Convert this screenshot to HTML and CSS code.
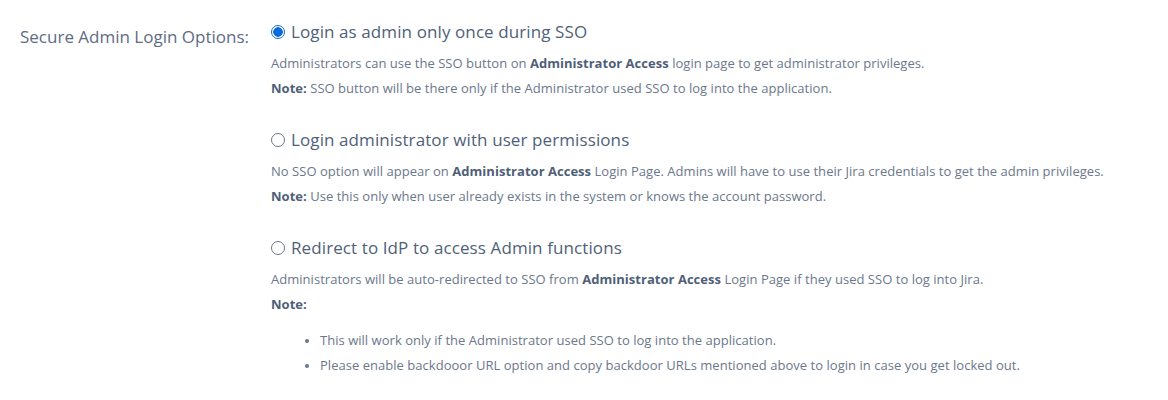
FILE: index.html
```html
<!DOCTYPE html>
<html>
<head>
<meta charset="utf-8">
<link rel="stylesheet" href="styles.css">
</head>
<body>
<div class="row">
  <div class="label">Secure Admin Login Options:</div>
  <div class="options">
    <div class="option">
      <label class="title"><span class="radio checked"></span>Login as admin only once during SSO</label>
      <p class="desc">Administrators can use the SSO button on <b>Administrator Access</b> login page to get administrator privileges.</p>
      <p class="desc"><b>Note:</b> SSO button will be there only if the Administrator used SSO to log into the application.</p>
    </div>
    <div class="option">
      <label class="title"><span class="radio"></span>Login administrator with user permissions</label>
      <p class="desc">No SSO option will appear on <b>Administrator Access</b> Login Page. Admins will have to use their Jira credentials to get the admin privileges.</p>
      <p class="desc"><b>Note:</b> Use this only when user already exists in the system or knows the account password.</p>
    </div>
    <div class="option">
      <label class="title"><span class="radio"></span>Redirect to IdP to access Admin functions</label>
      <p class="desc">Administrators will be auto-redirected to SSO from <b>Administrator Access</b> Login Page if they used SSO to log into Jira.</p>
      <p class="desc"><b>Note:</b></p>
      <ul class="bullets">
        <li>This will work only if the Administrator used SSO to log into the application.</li>
        <li>Please enable backdooor URL option and copy backdoor URLs mentioned above to login in case you get locked out.</li>
      </ul>
    </div>
  </div>
</div>
</body>
</html>
```
FILE: styles.css
```css
html, body {
  margin: 0;
  background: #ffffff;
}
body {
  font-family: "Open Sans", "Noto Sans", sans-serif;
  color: #6b778c;
}
.row {
  display: flex;
  padding-top: 20px;
}
.label {
  width: 250px;
  padding-left: 20px;
  padding-top: 5px;
  box-sizing: border-box;
  font-size: 17px;
  line-height: 24px;
  color: #5e6c84;
}
.options {
  display: flex;
  flex-direction: column;
  gap: 27px;
  padding-left: 21px;
}
.title {
  display: flex;
  align-items: center;
  font-size: 17px;
  line-height: 24px;
  color: #505f79;
  letter-spacing: 0.1px;
}
.radio {
  width: 12px;
  height: 12px;
  border: 1px solid #6b778c;
  border-radius: 50%;
  margin-right: 6px;
  box-sizing: content-box;
  flex: none;
}
.radio.checked {
  border: 1px solid #0b6bdc;
  background: radial-gradient(circle, #0b6bdc 0 4.5px, #ffffff 5px);
}
.desc {
  margin: 0;
  font-size: 13px;
  line-height: 25px;
  letter-spacing: 0.03px;
}
.title + .desc {
  margin-top: 7px;
}
.desc b {
  color: #505f79;
  font-weight: 700;
}
.bullets {
  margin: 11px 0 0 0;
  padding-left: 49px;
  font-size: 13px;
  line-height: 25px;
  letter-spacing: 0.03px;
}
.bullets li::marker {
  font-size: 11px;
}
```
